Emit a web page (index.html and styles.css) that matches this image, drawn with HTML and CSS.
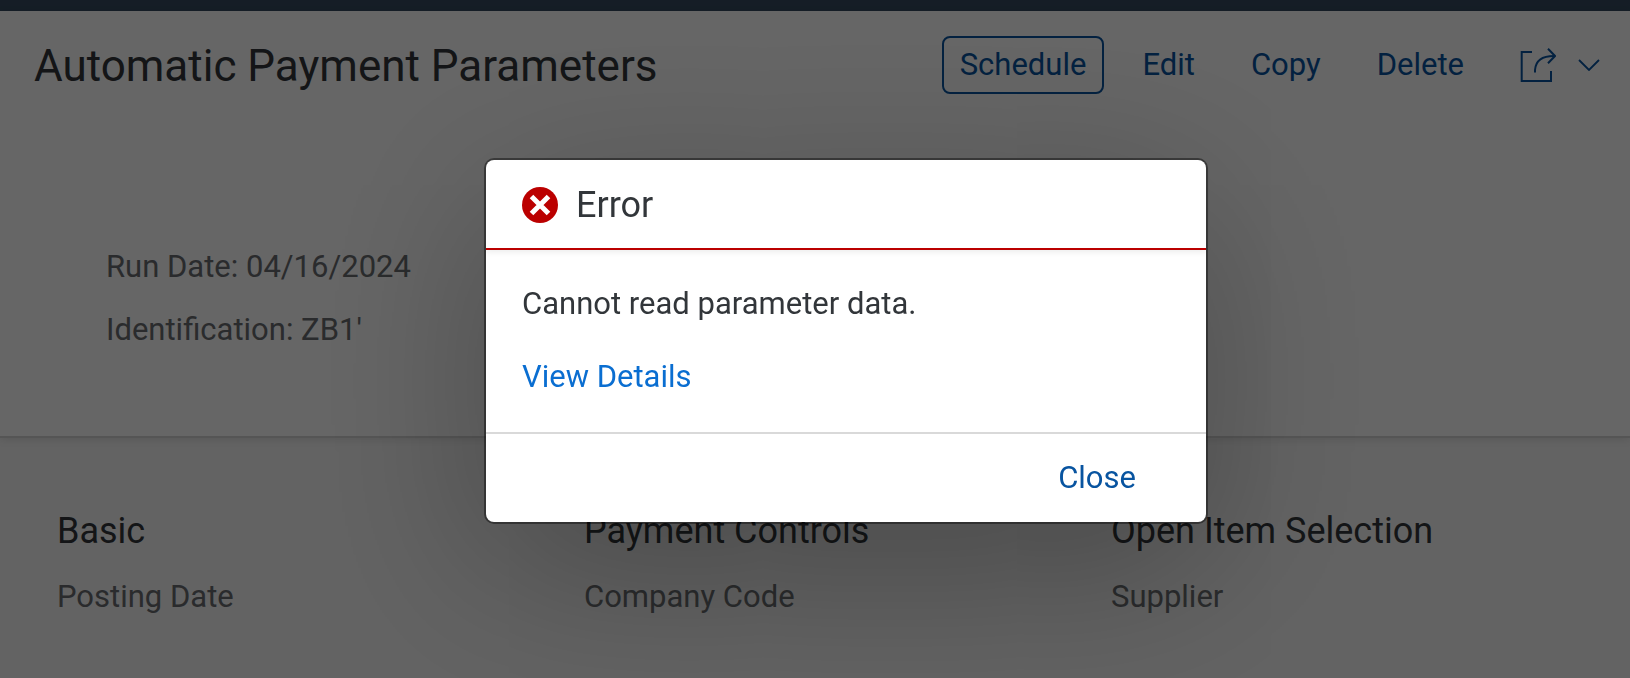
FILE: index.html
```
<!DOCTYPE html>
<html lang="en">
<head>
<meta charset="utf-8">
<meta name="viewport" content="width=device-width, initial-scale=1">
<title>Automatic Payment Parameters</title>
<link rel="stylesheet" href="styles.css">
</head>
<body>
<div class="shell-bar"></div>
<header class="page-header">
  <div class="title-row">
    <h1 class="page-title">Automatic Payment Parameters</h1>
    <div class="actions">
      <button type="button" class="btn btn-outlined">Schedule</button>
      <button type="button" class="btn">Edit</button>
      <button type="button" class="btn">Copy</button>
      <button type="button" class="btn">Delete</button>
      <button type="button" class="btn btn-share" aria-label="Share">
        <svg class="icon-share" viewBox="0 0 36 34" fill="none" stroke="currentColor" stroke-width="2">
          <path d="M12 4H1.700V33H31V23"/>
          <path d="M15 24.500V22Q16 8 34 8"/>
          <path d="M28 .8L35 8L28 15.200"/>
        </svg>
        <svg class="icon-chevron" viewBox="0 0 22 12" fill="none" stroke="currentColor" stroke-width="1.800">
          <path d="M1 1L11 11L21 1"/>
        </svg>
      </button>
    </div>
  </div>
  <div class="facts">
    <p class="fact">Run Date: 04/16/2024</p>
    <p class="fact">Identification: ZB1'</p>
  </div>
</header>
<main class="content">
  <section class="group">
    <h2 class="group-title">Basic</h2>
    <p class="field-label">Posting Date</p>
  </section>
  <section class="group">
    <h2 class="group-title">Payment Controls</h2>
    <p class="field-label">Company Code</p>
  </section>
  <section class="group">
    <h2 class="group-title">Open Item Selection</h2>
    <p class="field-label">Supplier</p>
  </section>
</main>
<div class="overlay">
  <div class="dialog" role="alertdialog" aria-modal="true" aria-labelledby="dialog-title">
    <div class="dialog-header">
      <svg class="icon-error" viewBox="0 0 36 36" aria-hidden="true">
        <circle cx="18" cy="18" r="18" fill="#b00"/>
        <path d="M9.500 9.500L26.500 26.500M26.500 9.500L9.500 26.500" stroke="#fff" stroke-width="5"/>
      </svg>
      <h2 class="dialog-title" id="dialog-title">Error</h2>
    </div>
    <div class="dialog-body">
      <p class="message">Cannot read parameter data.</p>
      <a class="details-link" href="#details">View Details</a>
    </div>
    <div class="dialog-footer">
      <button type="button" class="btn">Close</button>
    </div>
  </div>
</div>
</body>
</html>
```

FILE: styles.css
```
* {
  box-sizing: border-box;
}

body {
  margin: 0;
  min-height: 100vh;
  display: flex;
  flex-direction: column;
  overflow: hidden;
  background: #f7f7f7;
  color: #32363a;
  font-family: Roboto, "Liberation Sans", sans-serif;
  font-size: 31px;
  line-height: 40px;
}

h1,
h2,
p {
  margin: 0;
  font-weight: 400;
}

.shell-bar {
  height: 11px;
  background: #354a5f;
}

.page-header {
  padding: 25px 12px 86px 34px;
  background: #fff;
  border-bottom: 2px solid #d5d5d5;
  box-shadow: 0 2px 8px rgba(0, 0, 0, 0.1);
}

.title-row {
  display: flex;
  justify-content: space-between;
  align-items: flex-start;
}

.page-title {
  font-size: 44px;
  line-height: 60px;
}

.actions {
  display: flex;
  gap: 20px;
}

.btn {
  height: 58px;
  padding: 0 16px;
  border: 2px solid transparent;
  border-radius: 8px;
  background: transparent;
  color: #0854a0;
  font: inherit;
}

.btn-outlined {
  border-color: #0854a0;
}

.btn-share {
  display: flex;
  align-items: center;
  gap: 22px;
}

.icon-share {
  width: 36px;
  height: 34px;
}

.icon-chevron {
  width: 22px;
  height: 12px;
}

.facts {
  display: grid;
  gap: 23px;
  padding: 151px 0 0 72px;
}

.content {
  display: grid;
  grid-template-columns: repeat(3, 1fr);
  padding: 73px 0 0 57px;
  margin-right: -8px;
}

.group {
  display: grid;
  gap: 26px;
  align-content: start;
}

.group-title {
  font-size: 36px;
}

.field-label,
.fact {
  color: #6a6d70;
}

.overlay {
  position: fixed;
  inset: 0;
  display: flex;
  justify-content: center;
  align-items: center;
  padding: 4px 0 0 62px;
  background: rgba(0, 0, 0, 0.6);
}

.dialog {
  width: 720px;
  border-radius: 8px;
  background: #fff;
  box-shadow: 0 0 0 2px rgba(0, 0, 0, 0.42), 0 40px 180px rgba(0, 0, 0, 0.3);
}

.dialog-header {
  display: flex;
  align-items: center;
  gap: 18px;
  height: 90px;
  padding: 2px 36px 0;
  border-bottom: 2px solid #b00;
  box-shadow: 0 2px 6px rgba(0, 0, 0, 0.08);
}

.icon-error {
  width: 36px;
  height: 36px;
}

.dialog-title {
  font-size: 36px;
}

.dialog-body {
  display: grid;
  justify-items: start;
  gap: 33px;
  padding: 34px 36px 35px;
}

.details-link {
  color: #0a6ed1;
  text-decoration: none;
}

.dialog-footer {
  display: flex;
  justify-content: flex-end;
  align-items: center;
  height: 90px;
  padding: 0 52px;
  border-top: 2px solid #d9d9d9;
}
```
